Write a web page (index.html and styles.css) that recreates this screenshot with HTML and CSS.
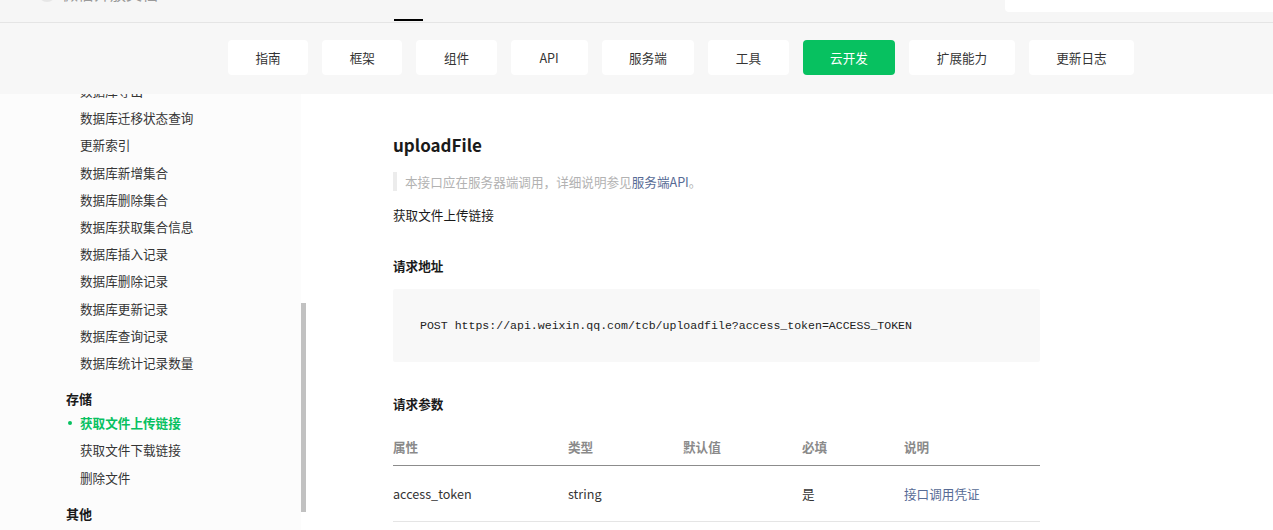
FILE: index.html
```html
<!DOCTYPE html>
<html lang="zh-CN">
<head>
  <meta charset="UTF-8">
  <title>uploadFile | 微信开放文档</title>
  <link rel="stylesheet" href="styles.css">
</head>
<body>

  <!-- Kopfzeile (schon teilweise weggescrollt) -->
  <div class="topbar">
    <div class="logo">
      <span class="logo-icon"></span>
      <span class="logo-text">微信开放文档</span>
    </div>
    <div class="tab-line"></div>
    <div class="search-box"></div>
  </div>

  <!-- Hauptnavigation -->
  <div class="nav">
    <a class="nav-btn" href="#">指南</a>
    <a class="nav-btn" href="#">框架</a>
    <a class="nav-btn" href="#">组件</a>
    <a class="nav-btn" href="#">API</a>
    <a class="nav-btn" href="#">服务端</a>
    <a class="nav-btn" href="#">工具</a>
    <a class="nav-btn active" href="#">云开发</a>
    <a class="nav-btn" href="#">扩展能力</a>
    <a class="nav-btn" href="#">更新日志</a>
  </div>

  <div class="main">
    <!-- Seitenleiste -->
    <div class="sidebar">
      <ul class="side-list">
        <li>数据库导出</li>
        <li>数据库迁移状态查询</li>
        <li>更新索引</li>
        <li>数据库新增集合</li>
        <li>数据库删除集合</li>
        <li>数据库获取集合信息</li>
        <li>数据库插入记录</li>
        <li>数据库删除记录</li>
        <li>数据库更新记录</li>
        <li>数据库查询记录</li>
        <li>数据库统计记录数量</li>
        <li class="side-group">存储</li>
        <li class="current">获取文件上传链接</li>
        <li>获取文件下载链接</li>
        <li>删除文件</li>
        <li class="side-group">其他</li>
      </ul>
      <div class="scroll-thumb"></div>
    </div>

    <!-- Inhalt -->
    <div class="content">
      <h1 class="doc-title">uploadFile</h1>
      <blockquote class="tip">本接口应在服务器端调用，详细说明参见<a href="#">服务端API</a>。</blockquote>
      <p class="desc">获取文件上传链接</p>

      <h3 class="section-title">请求地址</h3>
      <pre class="code-block">POST https://api.weixin.qq.com/tcb/uploadfile?access_token=ACCESS_TOKEN</pre>

      <h3 class="section-title">请求参数</h3>
      <table class="param-table">
        <thead>
          <tr>
            <th class="col-name">属性</th>
            <th class="col-type">类型</th>
            <th class="col-default">默认值</th>
            <th class="col-required">必填</th>
            <th>说明</th>
          </tr>
        </thead>
        <tbody>
          <tr>
            <td>access_token</td>
            <td>string</td>
            <td></td>
            <td>是</td>
            <td><a href="#">接口调用凭证</a></td>
          </tr>
        </tbody>
      </table>
    </div>
  </div>

</body>
</html>
```

FILE: styles.css
```css
body {
  font-family: "Noto Sans CJK SC", "Noto Sans", sans-serif;
  font-size: 12.6px;
  color: #353535;
  background-color: #ffffff;
  margin: 0;
  padding: 0;
  height: 530px;
  overflow: hidden;
}

a {
  text-decoration: none;
}

/* Kopfzeile */
.topbar {
  height: 22px;
  background-color: #f6f6f6;
  border-bottom: 1px solid #e5e5e5;
  display: flex;
  overflow: hidden;
}

.logo {
  display: flex;
  align-items: center;
  margin-left: 38px;
  margin-top: -17px;
  height: 20px;
}

.logo-icon {
  width: 18px;
  height: 18px;
  border-radius: 50%;
  background-color: #e6e6e6;
}

.logo-text {
  margin-left: 6px;
  color: #9a9a9a;
  font-size: 16px;
}

.tab-line {
  width: 29px;
  height: 2px;
  background-color: #000000;
  align-self: flex-end;
  margin-left: 236px;
  margin-bottom: 1px;
}

.search-box {
  width: 268px;
  height: 12px;
  margin-left: auto;
  background-color: #ffffff;
  border-radius: 0 0 0 4px;
}

/* Navigation */
.nav {
  height: 71px;
  background-color: #f7f7f7;
  display: flex;
  align-items: flex-start;
  gap: 14px;
  padding: 17px 0 0 228px;
  box-sizing: border-box;
}

.nav-btn {
  min-width: 77px;
  height: 35px;
  padding: 0 27.5px;
  box-sizing: border-box;
  display: flex;
  justify-content: center;
  align-items: center;
  background-color: #ffffff;
  border-radius: 4px;
  color: #353535;
  font-size: 12.6px;
}

.nav-btn.active {
  background-color: #07c160;
  color: #ffffff;
}

/* Hauptbereich */
.main {
  display: flex;
  height: 436px;
}

.sidebar {
  width: 307px;
  flex-shrink: 0;
  position: relative;
  overflow: hidden;
}

.side-list {
  list-style: none;
  margin: -17px 0 0 0;
  padding: 0;
  width: 301px;
  height: 470px;
  background-color: #fcfcfc;
}

.side-list li {
  line-height: 27.2px;
  padding-left: 80px;
  color: #353535;
  position: relative;
}

.side-list .side-group {
  padding-left: 66px;
  margin-top: 12px;
  line-height: 21px;
  font-weight: bold;
  font-size: 13px;
  color: #1a1a1a;
}

.side-list .current {
  color: #07c160;
  font-weight: bold;
}

.side-list .current::before {
  content: "";
  position: absolute;
  left: 68px;
  top: 12px;
  width: 4px;
  height: 4px;
  border-radius: 50%;
  background-color: #07c160;
}

.scroll-thumb {
  position: absolute;
  left: 301px;
  top: 209px;
  width: 5px;
  height: 209px;
  background-color: #c1c1c1;
}

/* Inhalt */
.content {
  margin-left: 86px;
  width: 647px;
  padding-top: 38px;
}

.doc-title {
  margin: 0;
  font-size: 17px;
  line-height: 26px;
  font-weight: bold;
  color: #1a1a1a;
}

.tip {
  margin: 14px 0 0 0;
  padding-left: 8px;
  border-left: 4px solid #ececec;
  line-height: 19px;
  color: #b2b2b2;
}

.tip a {
  color: #576b95;
}

.desc {
  margin: 14px 0 0 0;
  line-height: 20px;
  color: #1a1a1a;
}

.section-title {
  margin: 31px 0 0 0;
  font-size: 12.6px;
  line-height: 20px;
  font-weight: bold;
  color: #1a1a1a;
}

.code-block {
  margin: 13px 0 0 0;
  height: 73px;
  padding: 0 27px;
  box-sizing: border-box;
  display: flex;
  align-items: center;
  background-color: #f8f8f8;
  border-radius: 2px;
  font-family: "Liberation Mono", "DejaVu Sans Mono", monospace;
  font-size: 11.55px;
  color: #222222;
}

.code-block + .section-title {
  margin-top: 32px;
}

.param-table {
  margin-top: 13px;
  width: 100%;
  border-collapse: collapse;
  text-align: left;
}

.param-table th {
  height: 38px;
  padding: 0;
  font-weight: bold;
  color: #8a8a8a;
  border-bottom: 1px solid #8c8c8c;
}

.param-table td {
  height: 55px;
  padding: 0;
  color: #353535;
  border-bottom: 1px solid #e5e5e5;
}

.param-table td a {
  color: #576b95;
}

.col-name {
  width: 175px;
}

.col-type {
  width: 115px;
}

.col-default {
  width: 119px;
}

.col-required {
  width: 102px;
}
```
